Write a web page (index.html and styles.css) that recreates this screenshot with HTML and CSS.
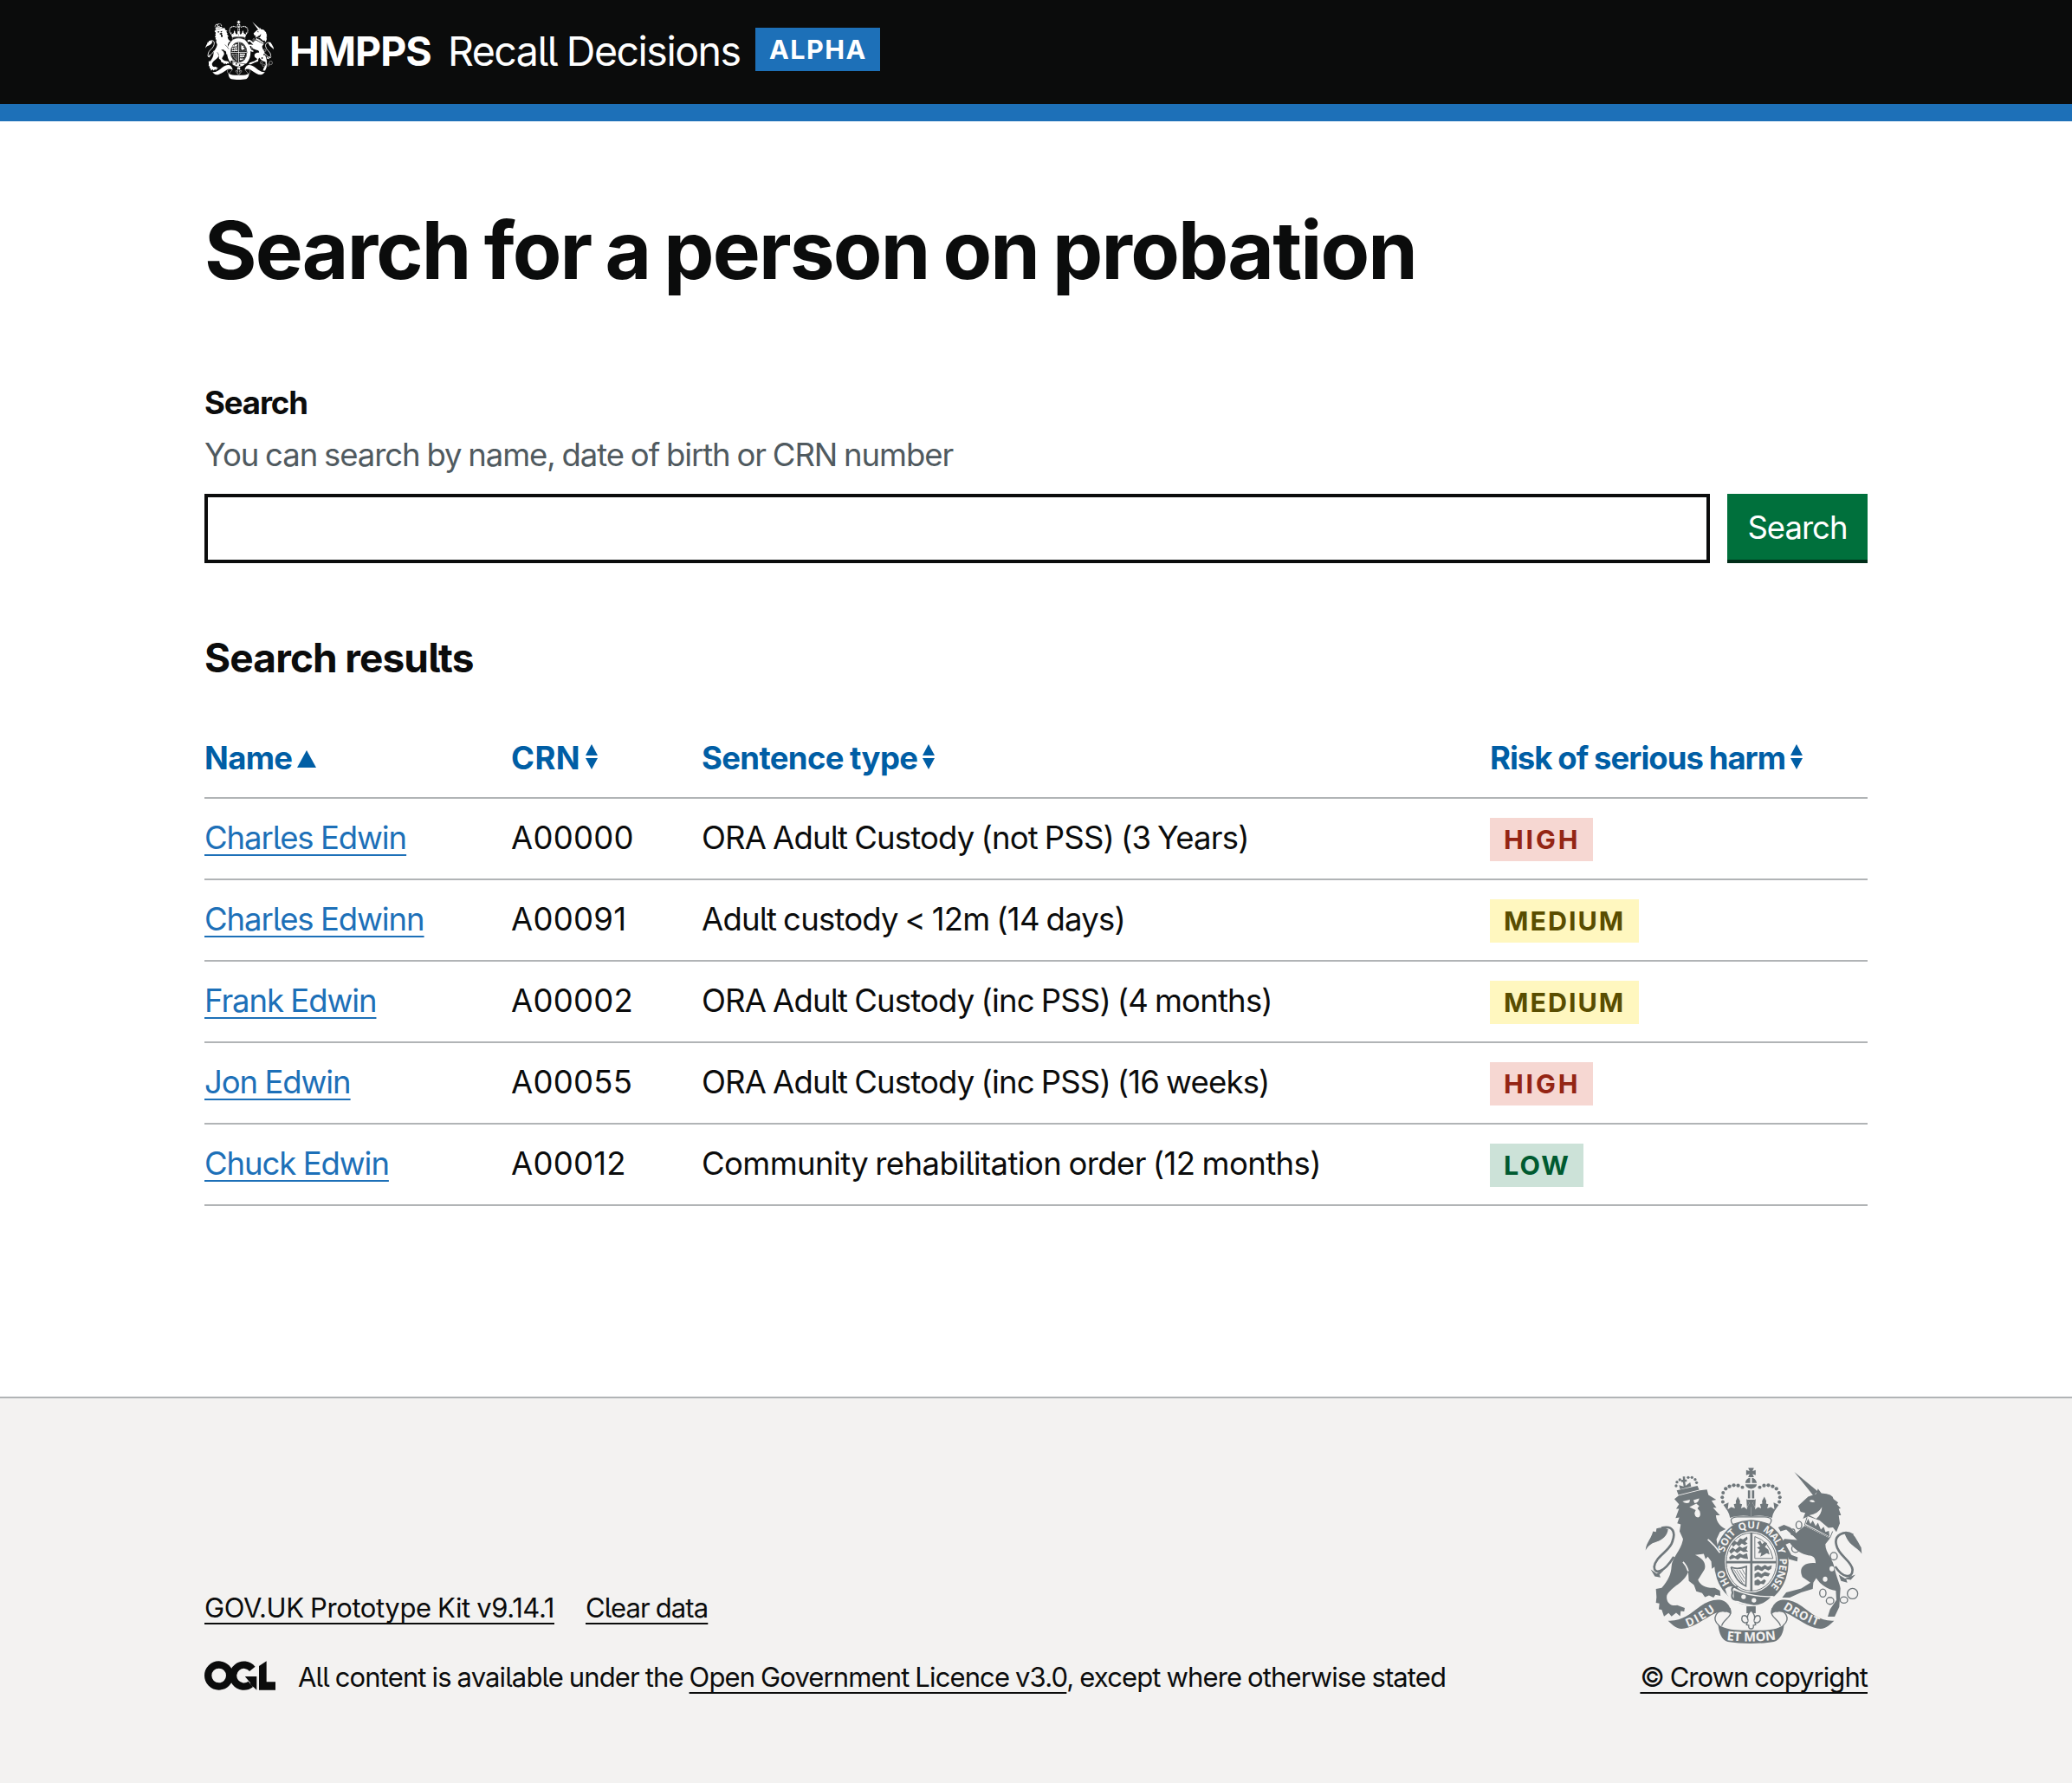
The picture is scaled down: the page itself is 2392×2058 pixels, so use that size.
FILE: index.html
```html
<!DOCTYPE html>
<html lang="en">
<head>
<meta charset="utf-8">
<title>Search for a person on probation</title>
<link rel="stylesheet" href="styles.css">
</head>
<body>
<svg class="defs" width="0" height="0" aria-hidden="true">
  <defs>
    <g id="scroll-side">
      <path d="M138 572C185 575 215 548 250 522C275 504 300 496 325 501C345 508 356 525 357 548C335 535 310 540 290 552C250 576 215 600 185 600C165 598 150 584 138 572Z"/>
      <path class="line" stroke-width="4" d="M352 528C366 560 330 565 324 590M338 540C310 530 286 562 314 588"/>
    </g>
    <g id="crown-side">
      <g>
        <circle cx="328" cy="160" r="6"/><circle cx="326" cy="144" r="6"/><circle cx="329" cy="128" r="6"/><circle cx="338" cy="114" r="6.5"/><circle cx="351" cy="106" r="6.5"/><circle cx="366" cy="102" r="6.5"/><circle cx="381" cy="103" r="6.5"/><circle cx="396" cy="109" r="6"/>
      </g>
      <path d="M330 170L348 162L345 186L357 178L370 182L366 168L374 166L373 157L380 142L388 157L387 166L395 168L391 182L402 178L412 186L410 150L426 158V210C400 206 375 208 353 215C350 195 340 185 330 170Z"/>
    </g>
    <g id="supporters">
      <!-- lion -->
      <path d="M168 120L240 104L246 118L174 136Z"/>
      <g><circle cx="166" cy="104" r="5"/><circle cx="169" cy="91" r="5"/><circle cx="179" cy="83" r="5"/><circle cx="237" cy="93" r="5"/><circle cx="232" cy="82" r="5"/><circle cx="221" cy="75" r="5"/><circle cx="208" cy="75" r="5"/></g>
      <path d="M189 72H197V82H203V90H197L199 104L215 92L218 106L180 116L176 102L192 106L190 91H184V83H190Z"/>
      <path d="M160 150L175 138L248 120L273 117L278 136L305 152L289 156L306 180L294 180L318 206L304 206C306 225 312 240 338 254L318 264L306 290L312 325L334 380L326 394L318 380L310 396L300 384L290 392L288 366L276 350L268 358L262 340L232 344C260 356 272 376 264 395L242 430C250 450 272 460 300 458L318 468L320 486L302 482L296 492L280 484L266 490L256 476L236 470L228 448L210 434L208 402C196 440 150 452 134 484C130 504 144 524 170 518L196 528L194 540L182 538L180 556L166 544L150 557L140 545L124 557L116 534L106 532L108 512L96 510L98 490L96 462L116 458C140 430 148 410 150 384C152 350 184 330 190 288L178 262L182 238L170 234L177 214L164 216L176 184L166 184L176 168Z"/>
      <path class="cut" d="M188 158L214 152L212 162Q200 168 188 158ZM226 154L246 148Q244 164 230 164ZM212 178L236 166L246 174L240 182L248 192Q254 212 242 214Q230 212 230 198L234 188Z"/>
      <path class="cutline" stroke-width="5" d="M276 290Q300 310 318 336M208 400Q202 380 190 368"/>
      <path class="line" stroke-width="8" d="M115 250C155 240 168 265 150 305C135 335 95 350 90 385C90 412 122 408 158 350"/>
      <path d="M60 328C62 300 78 292 86 262L96 264L98 252Q120 246 138 254C136 282 110 296 84 303Q68 312 60 328ZM78 394L98 408L124 396L108 412L112 422L92 418Z"/>
      <!-- unicorn -->
      <path d="M576 56L658 124L642 138Z"/>
      <path d="M589 174L624 142L652 132L658 114L670 130Q710 132 712 150L728 162L724 168L737 182L730 184L738 206L730 206L734 234L722 264L710 248L694 250L664 224L624 210L606 218L614 198L598 194Z"/>
      <path class="cut" d="M628 156Q640 148 648 160Q634 164 628 156ZM628 206Q658 202 672 178Q670 206 652 218Z"/>
      <path d="M612 242L700 286L684 306C682 334 712 360 716 392C722 420 734 445 736 460L732 524L716 558L692 558L700 532L722 500L720 468C690 462 668 448 652 424L642 440L640 462L600 474L560 492H534L548 474L600 460L632 440L604 420C590 390 608 368 650 372C650 352 640 346 624 345C604 342 580 330 560 302L546 308L566 344L588 352L586 366L556 358L550 338L530 302L542 288L586 292L566 272L548 256L528 262L520 248L540 239L562 248L582 268Z"/>
      <path d="M620 213L710 262L700 286L612 242Z" class="cut"/>
      <path class="line" stroke-width="3" d="M620 213L612 240L700 284L709 262"/>
      <path d="M616 236L624 218L632 236L640 224L650 244L658 232L668 256L678 246L684 264L696 260L698 280Z"/>
      <path class="line" stroke-width="8" d="M780 275C750 256 712 275 722 310C728 345 776 365 778 395C778 428 744 424 718 384"/>
      <path d="M750 268C785 262 788 286 808 318L810 340C795 315 766 316 750 268ZM730 412L752 426L788 412L772 430L756 428L760 440L738 434Z"/>
      <g class="ring"><ellipse cx="592" cy="240" rx="10" ry="13"/><ellipse cx="571" cy="264" rx="7" ry="10"/><ellipse cx="580" cy="322" rx="13" ry="13"/><ellipse cx="713" cy="348" rx="12" ry="13"/><ellipse cx="675" cy="476" rx="11" ry="14"/><ellipse cx="700" cy="503" rx="13" ry="12"/><ellipse cx="748" cy="500" rx="13" ry="11"/><circle cx="778" cy="478" r="18"/></g>
      <ellipse class="cut" cx="706" cy="392" rx="8" ry="9"/><ellipse class="cut" cx="683" cy="428" rx="8" ry="9"/>
    </g>
    <g id="crown">
      <use href="#crown-side"/>
      <use href="#crown-side" transform="translate(852 0) scale(-1 1)"/>
      <path d="M416 42H436L431 53L442 49V67L431 63L436 74H416L421 63L409 67V49L421 53Z"/>
      <path d="M406 94Q408 78 423 76V94ZM429 76Q442 78 446 94H429ZM406 99H446Q444 112 426 115Q408 112 406 99Z"/>
      <path d="M415 120H423V148H415ZM429 120H437V148H429Z"/>
      <path class="cut" d="M410 148L421 164L410 180L426 170L442 180L431 164L442 148L426 158Z"/>
      <path d="M412 152H440L431 164L440 178H412L421 164Z"/>
    </g>
    <g id="garter">
      <ellipse cx="427" cy="370" rx="129" ry="149"/>
      <ellipse class="cut" cx="427" cy="368" rx="92" ry="106"/>
    </g>
    <g id="shield">
      <ellipse class="line" stroke-width="3" cx="427" cy="368" rx="87" ry="101"/>
      <path d="M423 266H431V365H514V373H431V470H423V373H340V365H423Z"/>
      <path d="M358 306L368 294L378 300L388 286L398 290L412 280L414 288L406 298L414 304L404 310L394 304L384 314L374 306L364 316ZM350 330L362 318L372 326L386 314L396 320L414 312L410 326L416 332L400 334L390 328L378 338L368 330L356 340ZM350 352L360 342L372 348L386 338L398 344L412 338L414 350L416 358L400 356L390 352L380 360L368 354L352 360Z"/>
      <path d="M438 384L450 378L462 386L474 378L484 384L498 380L496 392L486 398L474 392L464 400L450 394L438 400ZM438 410L450 402L462 410L474 402L492 408L486 418L472 416L462 424L450 418L438 424ZM438 434L450 428L460 436L472 428L478 434L470 446L460 444L452 450L438 448Z"/>
      <path class="line" stroke-width="3" d="M439 280Q490 296 502 356H439Z"/>
      <path d="M448 300L458 294L464 306L474 298L482 304L474 316L486 326L490 342L480 338L470 344L458 350L462 336L450 338L456 326L446 318L458 314Z"/>
      <path class="line" stroke-width="5" d="M356 386Q378 396 410 384L408 452Q384 440 374 422Q362 404 356 386"/>
      <path class="line" stroke-width="2.5" d="M366 394L398 444M376 396L402 438M386 396L404 426M396 394L405 412"/>
    </g>
    <g id="buckle">
      <path class="cut" d="M336 462Q356 444 374 462Q420 488 500 486L540 500L500 526Q430 526 376 508Q344 500 336 462Z"/>
      <path d="M366 466Q430 492 494 490Q470 516 436 518Q390 510 366 496Z"/>
      <path class="line" stroke-width="6" d="M380 454Q352 452 362 474Q352 500 380 500"/>
      <circle class="cut" cx="400" cy="489" r="8"/><circle class="cut" cx="436" cy="501" r="8"/>
    </g>
    <path id="cushion" class="outlined" stroke-width="4" d="M362 238Q346 214 378 212H474Q508 214 490 238Q458 226 426 224Q394 226 362 238Z"/>
    <g id="scroll">
      <use href="#scroll-side"/>
      <use href="#scroll-side" transform="translate(852 0) scale(-1 1)"/>
      <path d="M312 585C340 608 400 605 426 605C470 605 512 608 540 585C540 610 528 640 505 645C460 653 390 653 345 645C325 640 314 615 312 585Z"/>
      <path d="M410 522H442V546H410Z"/>
      <path class="outlined" stroke-width="4" d="M426 536Q444 554 436 572Q440 548 456 556Q464 574 446 580L438 576L442 586L434 588Q436 600 426 600Q416 600 418 588L410 586L414 576L406 580Q388 574 396 556Q412 548 416 572Q408 554 426 536Z"/>
    </g>
    <path id="garter-line" d="M427 484A98 116 0 0 1 427 252A98 116 0 0 1 427 484"/>
    <path id="dieu-line" d="M206 594Q250 578 308 534"/>
    <path id="droit-line" d="M536 530Q588 564 662 592"/>
    <path id="mon-line" d="M341 639Q426 649 514 637"/>
  </defs>
</svg>

<header class="header">
  <div class="container header-inner">
    <svg class="header-crest" viewBox="50 35 770 625" preserveAspectRatio="none" aria-hidden="true">
      <use href="#garter"/><use href="#shield"/><use href="#buckle"/><use href="#cushion"/><use href="#crown"/><use href="#supporters"/><use href="#scroll"/>
    </svg>
    <span class="org">HMPPS</span>
    <span class="service">Recall Decisions</span>
    <strong class="tag tag-alpha">ALPHA</strong>
  </div>
</header>

<main class="container main">
  <h1>Search for a person on probation</h1>
  <form>
    <label for="q">Search</label>
    <div class="hint">You can search by name, date of birth or CRN number</div>
    <div class="search-row">
      <input id="q" type="text">
      <button type="button">Search</button>
    </div>
  </form>

  <h2>Search results</h2>
  <table>
    <colgroup><col class="c-name"><col class="c-crn"><col class="c-sentence"><col class="c-risk"></colgroup>
    <thead>
      <tr>
        <th><span class="sort">Name<svg class="one" viewBox="0 0 22 20"><path d="M11 0L22 20H0Z"/></svg></span></th>
        <th><span class="sort short">CRN<svg class="two" viewBox="0 0 14 29"><path d="M7 0L14 13H0ZM0 16H14L7 29Z"/></svg></span></th>
        <th><span class="sort">Sentence type<svg class="two" viewBox="0 0 14 29"><path d="M7 0L14 13H0ZM0 16H14L7 29Z"/></svg></span></th>
        <th><span class="sort risk">Risk of serious harm<svg class="two" viewBox="0 0 14 29"><path d="M7 0L14 13H0ZM0 16H14L7 29Z"/></svg></span></th>
      </tr>
    </thead>
    <tbody>
      <tr><td class="name"><a href="#">Charles Edwin</a></td><td class="crn">A00000</td><td class="sentence">ORA Adult Custody (not PSS) (3 Years)</td><td class="level"><strong class="tag tag-red">HIGH</strong></td></tr>
      <tr><td class="name"><a href="#">Charles Edwinn</a></td><td class="crn">A00091</td><td class="sentence">Adult custody &lt; 12m (14 days)</td><td class="level"><strong class="tag tag-yellow">MEDIUM</strong></td></tr>
      <tr><td class="name"><a href="#">Frank Edwin</a></td><td class="crn">A00002</td><td class="sentence">ORA Adult Custody (inc PSS) (4 months)</td><td class="level"><strong class="tag tag-yellow">MEDIUM</strong></td></tr>
      <tr><td class="name"><a href="#">Jon Edwin</a></td><td class="crn">A00055</td><td class="sentence">ORA Adult Custody (inc PSS) (16 weeks)</td><td class="level"><strong class="tag tag-red">HIGH</strong></td></tr>
      <tr><td class="name"><a href="#">Chuck Edwin</a></td><td class="crn">A00012</td><td class="sentence wide">Community rehabilitation order (12 months)</td><td class="level"><strong class="tag tag-green">LOW</strong></td></tr>
    </tbody>
  </table>
</main>

<footer class="footer">
  <div class="container footer-inner">
    <div class="footer-meta">
      <div class="footer-links"><a class="kit" href="#">GOV.UK Prototype Kit v9.14.1</a><a href="#">Clear data</a></div>
      <div class="licence">
        <svg class="ogl" viewBox="0 0 246 100" aria-label="OGL">
          <circle cx="50" cy="50" r="37.5"/>
          <path d="M166 27A37.5 37.5 0 1 0 160 80"/>
          <path class="solid" d="M141 53H181V100L170 90Q160 86 158 74L141 54ZM189 17L215 0V72H246V100H189Z"/>
        </svg>
        <span>All content is available under the <a href="#">Open Government Licence v3.0</a>, except where otherwise stated</span>
      </div>
    </div>
    <div class="copyright">
      <svg class="footer-crest" viewBox="50 35 770 625" aria-hidden="true">
        <use href="#garter"/><use href="#shield"/>
        <g class="motto garter-text">
          <text><textPath href="#garter-line" startOffset="88" textLength="54">HO</textPath></text>
          <text><textPath href="#garter-line" startOffset="202" textLength="78">SOIT</textPath></text>
          <text><textPath href="#garter-line" startOffset="294" textLength="68">QUI</textPath></text>
          <text><textPath href="#garter-line" startOffset="376" textLength="72">MAL</textPath></text>
          <text><textPath href="#garter-line" startOffset="456">Y</textPath></text>
          <text><textPath href="#garter-line" startOffset="492" textLength="106">PENSE</textPath></text>
        </g>
        <use href="#buckle"/><use href="#cushion"/><use href="#crown"/><use href="#supporters"/><use href="#scroll"/>
        <g class="motto scroll-text">
          <text><textPath href="#dieu-line" startOffset="0" textLength="112">DIEU</textPath></text>
          <text><textPath href="#droit-line" startOffset="0" textLength="134">DROIT</textPath></text>
          <text class="centre"><textPath href="#mon-line" startOffset="0" textLength="172">ET MON</textPath></text>
        </g>
      </svg>
      <a class="crown-link" href="#">© Crown copyright</a>
    </div>
  </div>
</footer>
</body>
</html>
```
FILE: styles.css
```css
* { box-sizing: border-box; }

body {
  margin: 0;
  background: #fff;
  color: #0b0c0c;
  font-family: Inter, "Open Sans", sans-serif;
  font-size: 36.5px;
  line-height: 50px;
  letter-spacing: -1.08px;
  word-spacing: -0.8px;
  font-feature-settings: "cv05";
  font-kerning: normal;
}

.defs { position: absolute; }
.container { width: 1920px; margin: 0 auto; }

a {
  color: #1d70b8;
  text-decoration: underline;
  text-decoration-thickness: 2px;
  text-underline-offset: 6px;
  text-decoration-skip-ink: none;
}

/* Crest parts: --ground is the colour behind the crest */
.header-crest, .footer-crest { fill: currentColor; }
.cut { fill: var(--ground); }
.line { fill: none; stroke: currentColor; }
.cutline { fill: none; stroke: var(--ground); }
.outlined { fill: var(--ground); stroke: currentColor; }
.ring { fill: none; stroke: currentColor; stroke-width: 4; }
.motto { fill: var(--ground); font-family: "Open Sans", sans-serif; font-weight: 700; letter-spacing: 0; word-spacing: 0; }
.garter-text { font-size: 35px; }
.scroll-text { font-size: 40px; }
.scroll-text .centre { font-size: 44px; }

/* Header */
.header { height: 140px; background: #0b0c0c; border-bottom: 20px solid #1d70b8; color: #fff; }
.header-inner { display: flex; height: 120px; align-items: flex-start; white-space: nowrap; }
.header-crest { --ground: #0b0c0c; width: 81px; height: 70px; margin-top: 23px; }
.org, .service { font-size: 46.5px; line-height: 60px; margin-top: 29px; }
.org { font-weight: 700; letter-spacing: -1px; width: 181px; margin-left: 17px; }
.service { letter-spacing: -1.5px; width: 354px; margin-left: 2px; font-weight: 400; }

.tag {
  display: block;
  width: max-content;
  height: 50px;
  padding: 0 15px 0 16px;
  font-size: 30.5px;
  font-weight: 700;
  line-height: 50px;
  letter-spacing: 2px;
}
.tag-alpha { margin-top: 32px; margin-left: 1px; background: #1d70b8; color: #fff; letter-spacing: 1.5px; }
.tag-red { background: #f6d7d2; color: #942514; letter-spacing: 2.8px; }
.tag-yellow { background: #fff7bf; color: #594d00; padding-right: 16px; }
.tag-green { background: #cce2d8; color: #005a30; }

/* Search form */
.main { padding-top: 98px; }
h1 { margin: 0 0 102px; font-size: 92.5px; line-height: 100px; font-weight: 700; letter-spacing: -1.85px; word-spacing: -4px; }
label { display: block; font-weight: 700; margin-bottom: 10px; }
.hint { color: #505a5f; margin-bottom: 20px; word-spacing: -1.3px; }
.search-row { display: flex; gap: 20px; height: 80px; }
input { flex: 1; min-width: 0; border: 4px solid #0b0c0c; border-radius: 0; padding: 0 10px; background: #fff; font: inherit; }
button {
  width: 162px;
  height: 76px;
  padding: 0;
  border: 0;
  background: #00703c;
  box-shadow: 0 4px 0 #002d18;
  color: #fff;
  font: inherit;
  letter-spacing: -1px;
  line-height: 79px;
}

/* Results */
h2 { margin: 79px 0 61px; font-size: 46px; line-height: 60px; font-weight: 700; letter-spacing: -0.85px; }
table { width: 100%; table-layout: fixed; border-collapse: separate; border-spacing: 0; }
.c-name { width: 354px; }
.c-crn { width: 220px; }
.c-sentence { width: 910px; }
.c-risk { width: 436px; }
th, td { padding: 0; text-align: left; vertical-align: top; border-bottom: 2px solid #b1b4b6; white-space: nowrap; font-weight: 400; }
th { height: 72px; }
td { height: 94px; padding-top: 20px; }
td.level { padding-top: 22px; }
.sort { display: flex; height: 50px; color: #005ea5; font-weight: 700; letter-spacing: -0.65px; }
.sort.short { letter-spacing: 0.4px; }
.sort.risk { letter-spacing: -1px; }
.sort svg { fill: currentColor; }
.sort .one { width: 22px; height: 20px; margin: 16px 0 0 6px; }
.sort .two { width: 14px; height: 29px; margin: 9px 0 0 6px; }
.name { letter-spacing: -1.08px; }
.crn { letter-spacing: 0.25px; }
.sentence { letter-spacing: -0.8px; word-spacing: -1.6px; }
.sentence.wide { letter-spacing: -0.6px; }

/* Footer */
.footer { height: 446px; margin-top: 220px; border-top: 2px solid #b1b4b6; background: #f3f2f1; font-size: 31px; line-height: 40px; letter-spacing: -0.88px; word-spacing: -0.9px; }
.footer a { color: inherit; }
.footer .kit { letter-spacing: -0.4px; }
.footer .crown-link { letter-spacing: -0.95px; }
.footer-inner { display: flex; justify-content: space-between; align-items: flex-end; padding-top: 78px; }
.footer-links { display: flex; gap: 36px; margin-bottom: 40px; }
.licence { display: flex; white-space: nowrap; }
.ogl { width: 82px; height: 34px; margin: 1px 26px 0 0; fill: none; stroke: #0b0c0c; stroke-width: 25; }
.ogl .solid { fill: #0b0c0c; stroke: none; }
.copyright { display: flex; flex-direction: column; align-items: flex-end; }
.footer-crest { --ground: #f3f2f1; width: 257px; height: 208px; margin: 0 3px 16px 0; color: #6f777b; }
```
